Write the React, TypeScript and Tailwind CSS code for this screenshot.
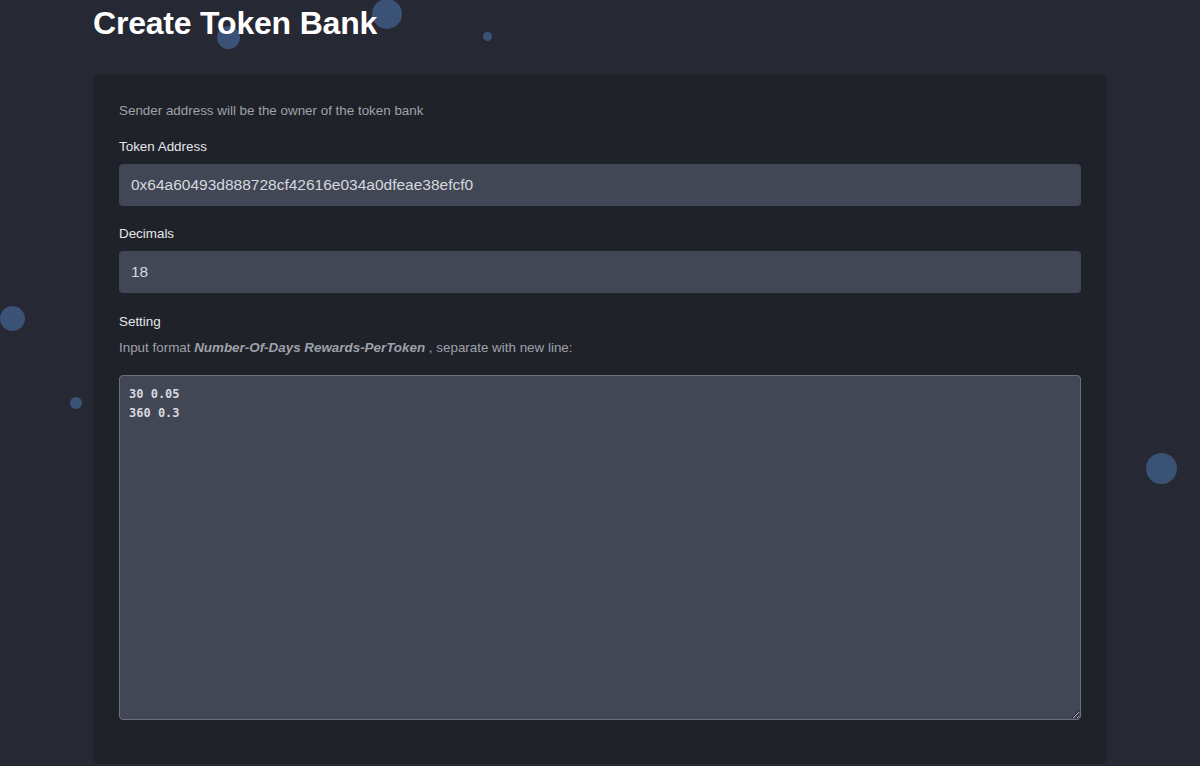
import { useState } from 'react'

const bubbles = [
  { id: 1, cls: 'left-[372px] top-[-1px] w-[30px] h-[30px]' },
  { id: 2, cls: 'left-[217px] top-[26px] w-[23px] h-[23px]' },
  { id: 3, cls: 'left-[483px] top-[32px] w-[9px] h-[9px]' },
  { id: 4, cls: 'left-0 top-[306px] w-[25px] h-[25px]' },
  { id: 5, cls: 'left-[70px] top-[397px] w-[12px] h-[12px]' },
  { id: 6, cls: 'left-[1146px] top-[453px] w-[31px] h-[31px]' },
]

export default function App() {
  const [tokenAddress, setTokenAddress] = useState('0x64a60493d888728cf42616e034a0dfeae38efcf0')
  const [decimals, setDecimals] = useState('18')
  const [setting, setSetting] = useState('30 0.05\n360 0.3')

  return (
    <div className="relative min-h-screen overflow-hidden bg-[#262833] font-['Liberation_Sans',Arial,sans-serif]">
      {/* floating particles */}
      {bubbles.map((b) => (
        <div key={b.id} className={`absolute rounded-full bg-[#3b5277] ${b.cls}`} />
      ))}

      <div className="relative z-10 mx-[93px]">
        <h1 className="pt-[3px] text-[32px] leading-[40px] font-bold text-white tracking-[-0.2px]">
          Create Token Bank
        </h1>

        <div className="mt-[32px] rounded-md bg-[#20222a] px-[26px] pt-[26px] pb-[44px]">
          <p className="text-[13.4px] leading-5 text-[#9ea1a9]">Sender address will be the owner of the token bank</p>

          <label className="mt-[16px] block text-[13.4px] leading-5 text-[#e6e7ea]">Token Address</label>
          <input
            type="text"
            value={tokenAddress}
            onChange={(e) => setTokenAddress(e.target.value)}
            className="mt-[7px] block h-[42px] w-full rounded bg-[#424756] px-3 text-[15.5px] text-[#d6d8de] outline-none"
          />

          <label className="mt-[18px] block text-[13.4px] leading-5 text-[#e6e7ea]">Decimals</label>
          <input
            type="text"
            value={decimals}
            onChange={(e) => setDecimals(e.target.value)}
            className="mt-[7px] block h-[42px] w-full rounded bg-[#424756] px-3 text-[15.5px] text-[#d6d8de] outline-none"
          />

          <label className="mt-[19px] block text-[13.4px] leading-5 text-[#e6e7ea]">Setting</label>
          <p className="mt-[6px] text-[13.4px] leading-5 text-[#9ea1a9]">
            Input format <b className="italic font-bold">Number-Of-Days Rewards-PerToken</b> , separate with new line:
          </p>
          <textarea
            value={setting}
            onChange={(e) => setSetting(e.target.value)}
            className="mt-[17px] block h-[345px] w-full rounded border border-[#6d717d] bg-[#424756] px-[9px] py-[9px] font-['DejaVu_Sans_Mono',monospace] text-[12px] leading-[19px] font-bold text-[#d6d8de] outline-none"
          />
        </div>
      </div>
    </div>
  )
}
